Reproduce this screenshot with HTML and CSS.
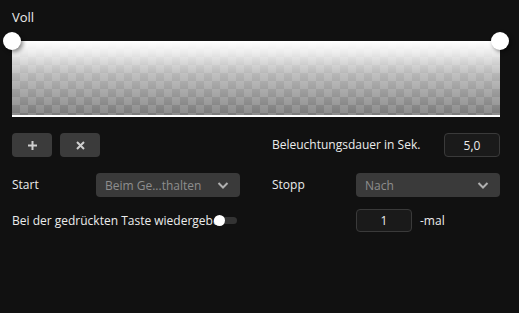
FILE: index.html
```html
<!DOCTYPE html>
<html>
<head>
<meta charset="utf-8">
<link rel="stylesheet" href="styles.css">
</head>
<body>
<div class="page">
  <div class="title">Voll</div>
  <div class="curve">
    <div class="area"></div>
    <span class="handle handle-left"></span>
    <span class="handle handle-right"></span>
  </div>
  <div class="grid">
    <div class="cell">
      <button class="btn" aria-label="add">
        <svg width="11" height="11" viewBox="0 0 11 11"><path d="M5.5 1v9M1 5.5h9" stroke="#cfcfcf" stroke-width="2"/></svg>
      </button>
      <button class="btn" aria-label="remove">
        <svg width="9" height="9" viewBox="0 0 9 9"><path d="M1 1l7 7M8 1l-7 7" stroke="#cfcfcf" stroke-width="2"/></svg>
      </button>
    </div>
    <div class="cell spread">
      <span class="label">Beleuchtungsdauer in Sek.</span>
      <span class="input wide">5,0</span>
    </div>
    <div class="cell">
      <span class="label fixed">Start</span>
      <div class="select"><span>Beim Ge...thalten</span>
        <svg width="12" height="7" viewBox="0 0 12 7"><path d="M1.5 1l4.5 4.5L10.5 1" stroke="#b0b0b0" stroke-width="2" fill="none"/></svg>
      </div>
    </div>
    <div class="cell">
      <span class="label fixed">Stopp</span>
      <div class="select"><span>Nach</span>
        <svg width="12" height="7" viewBox="0 0 12 7"><path d="M1.5 1l4.5 4.5L10.5 1" stroke="#b0b0b0" stroke-width="2" fill="none"/></svg>
      </div>
    </div>
    <div class="cell row3">
      <span class="label clip">Bei der gedrückten Taste wiedergeben</span>
      <span class="toggle"><span class="knob"></span></span>
    </div>
    <div class="cell row3 indent">
      <span class="input small">1</span>
      <span class="label">-mal</span>
    </div>
  </div>
</div>
</body>
</html>
```
FILE: styles.css
```css
* { box-sizing: border-box; }
html, body { margin: 0; background: #111111; }
body {
  font-family: "Open Sans", "Noto Sans", sans-serif;
  font-size: 12px;
  color: #ececec;
  width: 519px;
  height: 313px;
  overflow: hidden;
}
.page { padding: 8px 19px 0 12px; }
.title { font-size: 13px; line-height: 18px; height: 33px; }
.curve { position: relative; height: 76px; }
.area {
  height: 76px;
  border-bottom: 2px solid #ffffff;
  background:
    linear-gradient(to bottom, rgba(255,255,255,1) 0%, rgba(255,255,255,0.85) 15%, rgba(255,255,255,0.45) 45%, rgba(255,255,255,0) 100%),
    repeating-conic-gradient(#8c8c8c 0 25%, #7a7a7a 0 50%) 0 0 / 16px 16px;
}
.handle {
  position: absolute;
  top: -9px;
  width: 18px;
  height: 18px;
  border-radius: 50%;
  background: #ffffff;
  box-shadow: 2px 2px 4px rgba(0,0,0,0.45);
}
.handle-left { left: -9px; }
.handle-right { right: -9px; }
.grid {
  display: grid;
  grid-template-columns: 228px 228px;
  column-gap: 32px;
  grid-template-rows: 24px 24px 23px;
  row-gap: 16px;
  margin-top: 16px;
}
.grid .row3 { margin-top: -8px; }
.cell { display: flex; align-items: center; gap: 8px; }
.spread { justify-content: space-between; }
.btn {
  width: 40px;
  height: 24px;
  border: 0;
  border-radius: 4px;
  background: #3b3b3b;
  display: flex;
  align-items: center;
  justify-content: center;
  padding: 0;
}
.label { white-space: nowrap; line-height: 16px; }
.fixed { width: 76px; }
.input {
  height: 24px;
  border: 1px solid #3a3a3a;
  border-radius: 4px;
  background: #1a1a1a;
  display: flex;
  align-items: center;
  justify-content: center;
  color: #ececec;
}
.wide { width: 56px; }
.small { width: 56px; height: 23px; }
.indent { padding-left: 84px; }
.select {
  width: 144px;
  height: 24px;
  border-radius: 4px;
  background: #3a3a3a;
  color: #8e8e8e;
  display: flex;
  align-items: center;
  justify-content: space-between;
  padding: 0 11px 0 9px;
}
.clip { width: 204px; overflow: hidden; flex: none; }
.row3 { gap: 0; }
.toggle {
  position: relative;
  width: 22px;
  height: 7px;
  border-radius: 4px;
  background: #333333;
  margin-left: -1px;
  flex: none;
}
.knob {
  position: absolute;
  left: -1px;
  top: -2px;
  width: 11px;
  height: 11px;
  border-radius: 50%;
  background: #ffffff;
}
.indent.row3 { gap: 8px; }
```
